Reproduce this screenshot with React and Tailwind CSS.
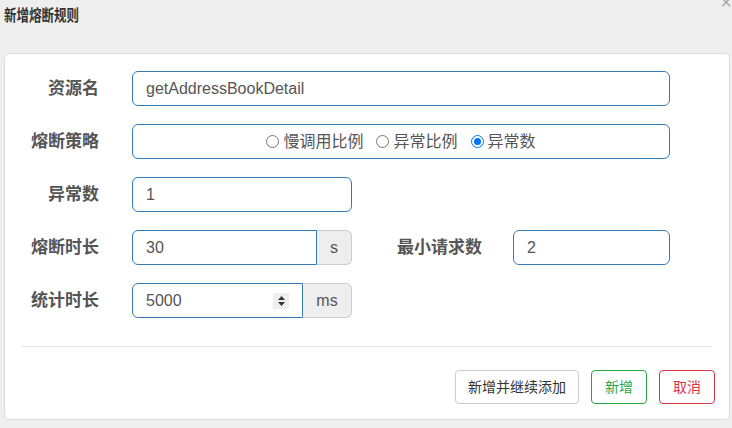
import { useState } from 'react'

const font = { fontFamily: '"Liberation Sans", "Noto Sans CJK SC", sans-serif' }

function Label({ children, className = '' }) {
  return (
    <label className={`text-[17px] font-bold text-[#555] text-right whitespace-nowrap ${className}`}>
      {children}
    </label>
  )
}

function Radio({ checked, label, onClick }) {
  return (
    <label className="flex items-center gap-[4px] cursor-pointer" onClick={onClick}>
      <span
        className={`w-[13px] h-[13px] rounded-full border flex items-center justify-center ${
          checked ? 'border-[#0075ff]' : 'border-[#767676]'
        }`}
      >
        {checked && <span className="w-[7px] h-[7px] rounded-full bg-[#0075ff]" />}
      </span>
      <span>{label}</span>
    </label>
  )
}

export default function App() {
  const [strategy, setStrategy] = useState(2)

  return (
    <div className="relative w-[732px] h-[428px] bg-[#efefef] overflow-hidden" style={font}>
      <div className="h-[53px] pl-[4px] pt-[5px]">
        <h3 className="text-[16px] font-bold text-[#333] leading-[22px] origin-left scale-x-[0.78]">新增熔断规则</h3>
      </div>
      <span className="absolute right-[0px] top-[-8px] text-[20px] leading-none text-[#aaa]">×</span>

      <div className="ml-[4px] w-[726px] h-[367px] bg-white border border-[#dcdcdc] rounded-[5px] pt-[17px]">
        <div className="flex flex-col gap-[18px] text-[16px] text-[#555]">
          <div className="flex items-center h-[35px]">
            <Label className="w-[94px]">资源名</Label>
            <input
              defaultValue="getAddressBookDetail"
              className="ml-[33px] w-[538px] h-[35px] border border-[#337ab7] rounded-[6px] px-[13px] outline-none"
            />
          </div>

          <div className="flex items-center h-[35px]">
            <Label className="w-[94px]">熔断策略</Label>
            <div className="ml-[33px] w-[538px] h-[35px] border border-[#337ab7] rounded-[6px] flex items-center justify-center gap-[13px]">
              <Radio checked={strategy === 0} label="慢调用比例" onClick={() => setStrategy(0)} />
              <Radio checked={strategy === 1} label="异常比例" onClick={() => setStrategy(1)} />
              <Radio checked={strategy === 2} label="异常数" onClick={() => setStrategy(2)} />
            </div>
          </div>

          <div className="flex items-center h-[35px]">
            <Label className="w-[94px]">异常数</Label>
            <input
              defaultValue="1"
              className="ml-[33px] w-[220px] h-[35px] border border-[#337ab7] rounded-[6px] px-[13px] outline-none"
            />
          </div>

          <div className="flex items-center h-[35px]">
            <Label className="w-[94px]">熔断时长</Label>
            <div className="ml-[33px] flex w-[220px] h-[35px]">
              <input
                defaultValue="30"
                className="w-[185px] h-[35px] border border-[#337ab7] rounded-l-[6px] px-[13px] outline-none"
              />
              <span className="flex-1 flex items-center justify-center bg-[#eee] border border-l-0 border-[#ccc] rounded-r-[6px]">
                s
              </span>
            </div>
            <Label className="ml-[42px] w-[88px]">最小请求数</Label>
            <input
              defaultValue="2"
              className="ml-[31px] w-[157px] h-[35px] border border-[#337ab7] rounded-[6px] px-[13px] outline-none"
            />
          </div>

          <div className="flex items-center h-[35px]">
            <Label className="w-[94px]">统计时长</Label>
            <div className="ml-[33px] flex w-[220px] h-[35px]">
              <div className="w-[171px] h-[35px] border border-[#337ab7] rounded-l-[6px] pl-[13px] pr-[13px] flex items-center">
                <span className="flex-1">5000</span>
                <span className="w-[16px] h-[16px] bg-[#eee] flex flex-col items-center justify-center gap-[2px]">
                  <svg width="7" height="4" viewBox="0 0 7 4"><path d="M0 4 L3.5 0 L7 4 Z" fill="#333" /></svg>
                  <svg width="7" height="4" viewBox="0 0 7 4"><path d="M0 0 L3.5 4 L7 0 Z" fill="#333" /></svg>
                </span>
              </div>
              <span className="flex-1 flex items-center justify-center bg-[#eee] border border-l-0 border-[#ccc] rounded-r-[6px]">
                ms
              </span>
            </div>
          </div>
        </div>

        <div className="mx-[17px] mt-[28px] border-t border-[#e5e5e5]" />

        <div className="flex justify-end gap-[12px] pr-[14px] mt-[23px] text-[14px]">
          <button className="h-[34px] px-[12px] border border-[#ccc] rounded-[4px] text-[#333] bg-white">
            新增并继续添加
          </button>
          <button className="h-[34px] w-[56px] border border-[#28a745] rounded-[4px] text-[#28a745] bg-white">
            新增
          </button>
          <button className="h-[34px] w-[56px] border border-[#dc3545] rounded-[4px] text-[#dc3545] bg-white">
            取消
          </button>
        </div>
      </div>
    </div>
  )
}
